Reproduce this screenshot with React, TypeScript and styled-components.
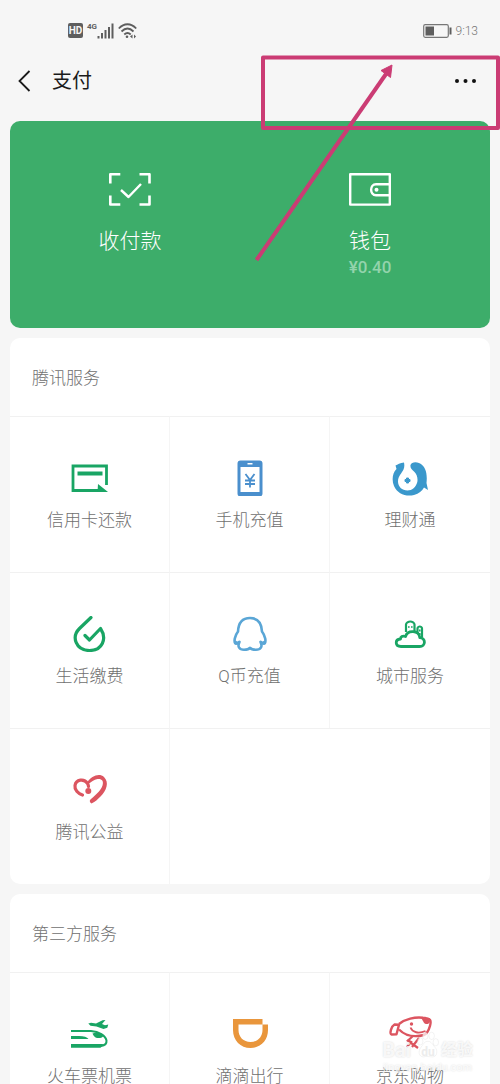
import React from "react";
import styled, { createGlobalStyle } from "styled-components";

const GlobalStyle = createGlobalStyle`
  * { box-sizing: border-box; }
  body {
    margin: 0;
    background: #f6f6f6;
    font-family: Roboto, "Noto Sans CJK SC", sans-serif;
  }
`;

const Screen = styled.div`
  position: relative;
  height: 100vh;
  overflow-x: hidden;
  overflow-y: auto;
  scrollbar-width: none;
  background: #f6f6f6;
`;

const StatusBar = styled.div`
  display: flex;
  justify-content: space-between;
  align-items: center;
  height: 61px;
  padding: 0 22px 0 68px;
`;

const StatusGroup = styled.div`
  display: flex;
  align-items: center;
  gap: 4px;
`;

const HdBadge = styled.span`
  width: 15px;
  height: 15px;
  border-radius: 2px;
  background: #5e5e5e;
  color: #f6f6f6;
  font-size: 10px;
  font-weight: 700;
  line-height: 15px;
  text-align: center;
`;

const Network = styled.span`
  align-self: flex-start;
  color: #5e5e5e;
  font-size: 8px;
  font-weight: 700;
  line-height: 8px;
`;

const Signal = styled.span`
  display: flex;
  align-items: center;
`;

const Clock = styled.time`
  color: #777;
  font-size: 12px;
  font-weight: 300;
  line-height: 16px;
`;

const NavBar = styled.header`
  display: flex;
  align-items: center;
  height: 40px;
  padding: 0 19px 0 12px;
`;

const IconButton = styled.button`
  display: flex;
  align-items: center;
  justify-content: center;
  padding: 4px;
  border: 0;
  background: none;
  color: #111;
`;

const Title = styled.h1`
  flex: 1;
  margin: 0 0 0 14px;
  color: #1a1a1a;
  font-size: 20px;
  font-weight: 400;
  line-height: 28px;
`;

const Content = styled.main`
  display: flex;
  flex-direction: column;
  gap: 10px;
  padding: 20px 10px 10px;
`;

const PayCard = styled.section`
  display: grid;
  grid-template-columns: 1fr 1fr;
  height: 207px;
  border-radius: 10px;
  background: #3dad6a;
`;

const PayAction = styled.button`
  display: flex;
  flex-direction: column;
  align-items: center;
  padding: 50px 0 0;
  border: 0;
  background: none;
  color: #fff;
  font-family: inherit;
`;

const PayLabel = styled.span`
  margin-top: 20px;
  font-size: 21px;
  font-weight: 300;
  line-height: 28px;
`;

const Amount = styled.span`
  color: #93d3ac;
  font-size: 17px;
  font-weight: 500;
  line-height: 24px;
`;

const Card = styled.section`
  overflow: hidden;
  border-radius: 10px;
  background: #fff;
`;

const CardTitle = styled.h2`
  margin: 0;
  padding: 28px 22px 26px;
  color: #707070;
  font-size: 17px;
  font-weight: 300;
  line-height: 24px;
`;

const Grid = styled.div`
  display: grid;
  grid-template-columns: repeat(3, 1fr);
`;

const Tile = styled.a<{ $edge: boolean }>`
  display: flex;
  flex-direction: column;
  align-items: center;
  gap: 12px;
  height: 156px;
  padding-top: 43px;
  border-top: 1px solid #f1f1f1;
  border-right: ${(p) => (p.$edge ? "0" : "1px solid #f5f5f5")};
  color: #707070;
  font-size: 17px;
  font-weight: 300;
  line-height: 24px;
  text-decoration: none;
`;

const Filler = styled.div`
  grid-column: span 2;
  border-top: 1px solid #f1f1f1;
`;

const Annotation = styled.svg`
  position: absolute;
  top: 50px;
  right: 0;
  pointer-events: none;
`;

const Watermark = styled.div`
  position: absolute;
  top: 1028px;
  right: 27px;
  display: flex;
  flex-direction: column;
  align-items: center;
  color: rgba(255, 255, 255, 0.8);
  text-shadow: 0 0 2px rgba(0, 0, 0, 0.16);
  pointer-events: none;
`;

const WatermarkBrand = styled.span`
  display: flex;
  align-items: flex-end;
  height: 34px;
  font-size: 20px;
  font-weight: 700;
  line-height: 24px;
`;

const WatermarkName = styled.span`
  font-size: 16px;
`;

const Paw = styled.span`
  position: relative;
  display: flex;
  margin: 0 2px 3px 6px;
`;

const PawText = styled.span`
  position: absolute;
  right: 0;
  bottom: 1px;
  left: 0;
  color: #ececec;
  font-size: 12px;
  line-height: 12px;
  text-align: center;
  text-shadow: none;
`;

const WatermarkUrl = styled.span`
  font-size: 11px;
  line-height: 12px;
`;

const GREEN = "#19a564";
const BLUE = "#4a8fcd";
const SKY = "#3a98cc";
const RED = "#dc5560";

const TileIcon = ({ children }: { children: React.ReactNode }) => (
  <svg width="44" height="36" viewBox="0 0 44 36" fill="none" aria-hidden="true">
    {children}
  </svg>
);

const CardIcon = () => (
  <TileIcon>
    <path d="M38.500 25V6H5v24.500h25" stroke={GREEN} strokeWidth="2.800" />
    <path d="M9.500 13.500H34.500" stroke={GREEN} strokeWidth="4" />
    <path d="M30 24l10 8H29.500z" fill={GREEN} />
  </TileIcon>
);

const PhoneIcon = () => (
  <TileIcon>
    <path fillRule="evenodd" fill={BLUE} d="M12.500 .5h19a3 3 0 0 1 3 3v30a3 3 0 0 1-3 3h-19a3 3 0 0 1-3-3v-30a3 3 0 0 1 3-3zM12.500 7v25h19V7z" />
    <path d="M19.500 3.800h5" stroke="#fff" strokeWidth="1.400" />
    <path d="M17.500 14l4.500 6 4.500-6M17 20.500h10M17 24h10M22 20v7.500" stroke={BLUE} strokeWidth="1.800" />
  </TileIcon>
);

const FishIcon = () => (
  <TileIcon>
    <path fill={SKY} d="M16 2.500C12 2.500 9.500 5 7.500 5.500L8.500 9C4.500 13 3.500 20 6 26 9.500 34 18 37 26 35c5-1.500 8-4 10-7.500l4 2.500-1.500-7C39.500 14 38 6 31 3c-4-1.500-7.500-.5-8.500 2-.5 3 1.500 4.500 3.500 6.500 3 3 4 6.500 3.300 10.500C28 27 24 30.500 19.500 30.500 14 30.500 10 26.500 10 21.500 10 16 14 13 15.500 9.500 16.500 7 16.500 5 16 2.500z" />
    <path fill={SKY} d="M18.500 18h2v1.500H22v2h-1.500V23h-2v-1.500H17v-2h1.500z" stroke={SKY} strokeWidth="1" strokeLinejoin="round" />
  </TileIcon>
);

const DropIcon = () => (
  <TileIcon>
    <path d="M23 1.500L11.500 12.500C3 21 8 34.500 21.500 34.500 34 34.500 39.500 23 32.500 12.500L21.500 24 17 19.500" stroke={GREEN} strokeWidth="3.200" strokeLinecap="round" strokeLinejoin="round" />
  </TileIcon>
);

const PenguinIcon = () => (
  <TileIcon>
    <path d="M9.500 27c-2 2-3.500-.5-2.700-4.500 .6-3 1.700-5 3.200-7C10.500 6 15.500 2 22 2s11.500 4 12 13.500c1.500 2 2.600 4 3.200 7 .8 4-.7 6.500-2.700 4.500M7.500 26c1 1 2 1.500 4-.2-2.500 5 0 8 4.500 8 3 0 5-.5 6-2 1 1.500 3 2 6 2 4.500 0 7-3 4.500-8 2 1.700 3 1.200 4 .2" stroke="#5aa6d6" strokeWidth="2.600" strokeLinecap="round" strokeLinejoin="round" />
  </TileIcon>
);

const CityIcon = () => (
  <TileIcon>
    <path d="M18 16V8.500c0-1.500 2.500-3 4.300-3s4.200 1.500 4.200 3V17M29.500 18v-5.500c0-1 1.500-2 2.300-2s2.200 1 2.200 2V21" stroke={GREEN} strokeWidth="2.200" />
    <path d="M20 11h1.600M23 11h1.600M31.800 13.500v2M31.800 17v2" stroke={GREEN} strokeWidth="1.600" />
    <path d="M13 30.500h18.500c6.500 0 6.500-8.500 .3-9C31 14 19.500 13.500 17.500 20.500c-3-1-5 .3-5 2.500-6 .5-5.500 7.500 .5 7.500z" fill="#fff" stroke={GREEN} strokeWidth="2.800" strokeLinejoin="round" />
  </TileIcon>
);

const HeartIcon = () => (
  <TileIcon>
    <path d="M14.500 23c-4.500-1.500-8.200-5.500-7.500-9.500 1-6 9-7.500 12.500-2 .6 1 1 2 1 3" stroke={RED} strokeWidth="3.200" strokeLinecap="round" />
    <path fill={RED} d="M19.500 10C23 4.500 31 .5 36 5c5.500 5.500 2.500 13.500-3.500 19.500-3 3-5 5-9 7-1.500-1-2-2-1.500-3.500 4-4 10.500-8.500 12.500-14.500 1.500-5-1-7-5-6.500-3.500 .5-6.500 3-9 5z" />
    <circle cx="20.300" cy="19" r="3" fill={RED} />
  </TileIcon>
);

const TrainIcon = () => (
  <TileIcon>
    <path d="M3 15h20c8 .5 14.500 4.500 15.500 9.500 .3 3-2 5-5.500 5.500" stroke={GREEN} strokeWidth="2" />
    <path fill={GREEN} d="M3 28h32c-.5 2-1.300 3-2.500 3.700H3zM3 20h8c5 0 8 1 9.500 3H3zM24.500 17.500c4-1.500 8-.5 11 2.500-1.500 2-4 2.300-6.500 2-2-.3-3.500-2-4.500-4.500z" />
    <path fill={GREEN} d="M20.300 7.500l2.700-.8 5 .8 6.500-3.300 3-.2-3.500 4 3 1.200 3.300-.6-1 3.200-3.800 1.200-7-2.500-6-.8z" />
  </TileIcon>
);

const DidiIcon = () => (
  <TileIcon>
    <path fillRule="evenodd" fill="#e9963c" d="M5 3h29.500v5.500H40V14c0 10.500-7.500 18-17.500 18S5 24.500 5 14zm5.500 5.500V14c0 7 5 12 12 12s12-5 12-12V8.500z" />
  </TileIcon>
);

const JdIcon = () => (
  <TileIcon>
    <path d="M11 8C17 3 27 .8 35 1.800c8 .7 8.500 2.700 7 8-1 3.500-3 7.700-6 9.200-8 2-18 1.500-25-5.500" stroke={RED} strokeWidth="2.400" />
    <path d="M6.500 8.500l4.500 .3-2.500 9.500-5 .2c-2-1-.5-8 3-10z" stroke={RED} strokeWidth="2.400" strokeLinejoin="round" />
    <path d="M22.500 11.500c2 5 8 6.500 15 3.500" stroke={RED} strokeWidth="1.800" />
    <path d="M25 20l-5 4.500 3 1.500-4 5M19 24l11 8M31 22l-7 9" stroke={RED} strokeWidth="2.200" />
    <circle cx="23.500" cy="8" r="1.700" fill={RED} />
    <path d="M33 2l9 .5c1 4-1.500 6-4 5.500s-3-4-5-6z" fill={RED} />
  </TileIcon>
);

type Service = { name: string; icon: React.ReactNode };

const tencent: Service[] = [
  { name: "信用卡还款", icon: <CardIcon /> },
  { name: "手机充值", icon: <PhoneIcon /> },
  { name: "理财通", icon: <FishIcon /> },
  { name: "生活缴费", icon: <DropIcon /> },
  { name: "Q币充值", icon: <PenguinIcon /> },
  { name: "城市服务", icon: <CityIcon /> },
  { name: "腾讯公益", icon: <HeartIcon /> },
];

const partners: Service[] = [
  { name: "火车票机票", icon: <TrainIcon /> },
  { name: "滴滴出行", icon: <DidiIcon /> },
  { name: "京东购物", icon: <JdIcon /> },
];

const ServiceCard = ({ title, items }: { title: string; items: Service[] }) => (
  <Card>
    <CardTitle>{title}</CardTitle>
    <Grid>
      {items.map((item, i) => (
        <Tile key={item.name} href="#" $edge={i % 3 === 2}>
          {item.icon}
          <span>{item.name}</span>
        </Tile>
      ))}
      {items.length % 3 === 1 && <Filler />}
    </Grid>
  </Card>
);

export default function App() {
  return (
    <Screen>
      <GlobalStyle />
      <StatusBar>
        <StatusGroup>
          <HdBadge>HD</HdBadge>
          <Signal>
            <Network>4G</Network>
            <svg width="17" height="16" viewBox="0 0 17 16" stroke="#5e5e5e" strokeWidth="2" aria-hidden="true">
              <path d="M1.500 13v2.500M5 10v5.500M8.500 7v8.500M12 4v11.500M15.500 .5v15" />
            </svg>
          </Signal>
          <svg width="19" height="16" viewBox="0 0 19 16" fill="none" stroke="#5e5e5e" strokeWidth="1.800" aria-hidden="true">
            <path d="M.8 5.500C6-.2 13-.2 18.200 5.500M3.500 8.500c4-4 8-4 12 0M6.300 11.500c2-2 4.400-2 6.400 0" />
            <circle cx="9" cy="13.800" r="1.300" fill="#5e5e5e" stroke="none" />
            <path d="M14.500 11.500v4l-2.500-2zM16 11.500v4l2-2z" fill="#5e5e5e" stroke="none" />
          </svg>
        </StatusGroup>
        <StatusGroup>
          <svg width="29" height="14" viewBox="0 0 29 14" fill="none" aria-hidden="true">
            <rect x=".7" y=".7" width="24.600" height="12.600" rx="1.500" stroke="#777" strokeWidth="1.200" />
            <rect x="2.500" y="2.500" width="8.500" height="9" fill="#5e5e5e" />
            <path d="M27.500 3.500v7" stroke="#5e5e5e" strokeWidth="2" />
          </svg>
          <Clock>9:13</Clock>
        </StatusGroup>
      </StatusBar>

      <NavBar>
        <IconButton aria-label="返回">
          <svg width="18" height="22" viewBox="0 0 18 22" fill="none" stroke="#1a1a1a" strokeWidth="1.800" aria-hidden="true">
            <path d="M13.500 1L3.500 11l10 10" />
          </svg>
        </IconButton>
        <Title>支付</Title>
        <IconButton aria-label="更多">
          <svg width="24" height="6" viewBox="0 0 24 6" fill="#111" aria-hidden="true">
            <circle cx="4" cy="3" r="2" />
            <circle cx="12.500" cy="3" r="2" />
            <circle cx="21" cy="3" r="2" />
          </svg>
        </IconButton>
      </NavBar>

      <Content>
        <PayCard>
          <PayAction>
            <svg width="44" height="36" viewBox="0 0 44 36" fill="none" stroke="#fff" strokeWidth="2.600" strokeLinejoin="round" aria-hidden="true">
              <path d="M2.300 12.500V3.300h10M31.500 3.300h10v9.200M41.500 24.500v9h-10M12.300 33.500h-10v-9" />
              <path d="M13 19l7.500 7 12.500-13" strokeWidth="2.400" />
            </svg>
            <PayLabel>收付款</PayLabel>
          </PayAction>
          <PayAction>
            <svg width="44" height="36" viewBox="0 0 44 36" fill="none" stroke="#fff" strokeWidth="2.400" strokeLinejoin="round" aria-hidden="true">
              <rect x="2.200" y="3.200" width="39.600" height="30.400" />
              <path d="M41.500 13.200H28c-6.500 0-6.500 11 0 11h13.500" />
              <circle cx="28.500" cy="18.700" r="2" fill="#fff" stroke="none" />
            </svg>
            <PayLabel>钱包</PayLabel>
            <Amount>¥0.40</Amount>
          </PayAction>
        </PayCard>
        <ServiceCard title="腾讯服务" items={tencent} />
        <ServiceCard title="第三方服务" items={partners} />
      </Content>

      <Annotation width="250" height="214" viewBox="0 0 250 214" fill="none" stroke="#cb3c74" strokeWidth="4" aria-hidden="true">
        <rect x="13" y="7.500" width="235" height="70.500" strokeLinejoin="round" />
        <path d="M6.500 210L136 24" />
        <path d="M142 15l-1.500 12.500-9.500-7z" fill="#cb3c74" strokeWidth="1" />
      </Annotation>

      <Watermark aria-hidden="true">
        <WatermarkBrand>
          Bai
          <Paw>
            <svg width="22" height="28" viewBox="0 0 24 30" fill="rgba(255,255,255,.7)" stroke="rgba(0,0,0,.06)">
              <ellipse cx="3.500" cy="11" rx="3" ry="4" />
              <ellipse cx="9" cy="5" rx="3" ry="4" />
              <ellipse cx="16" cy="5" rx="3" ry="4" />
              <ellipse cx="20.500" cy="12" rx="3" ry="4" />
              <path d="M12 11c4 0 5 4 8 7s2 10-3 10c-4 0-6-1-10 0-5 0-6-6-3-10s4-7 8-7z" />
            </svg>
            <PawText>du</PawText>
          </Paw>
          <WatermarkName>经验</WatermarkName>
        </WatermarkBrand>
        <WatermarkUrl>jingyan.baidu.com</WatermarkUrl>
      </Watermark>
    </Screen>
  );
}
